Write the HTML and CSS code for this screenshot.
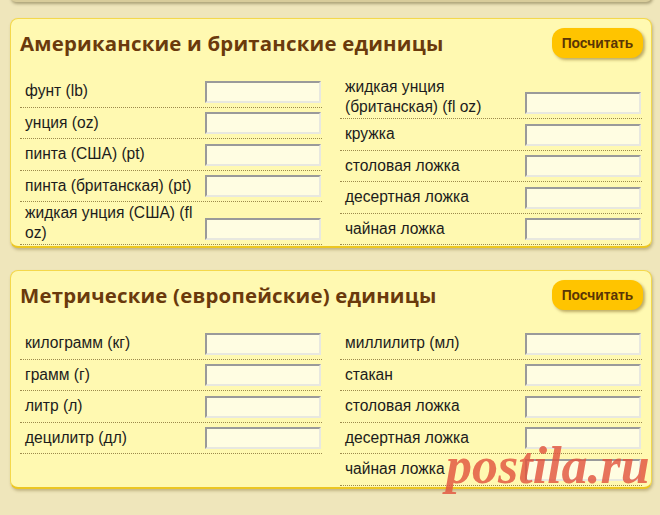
FILE: index.html
```html
<!DOCTYPE html>
<html>
<head>
    <title>Конвертер единиц</title>
    <link rel="stylesheet" href="styles.css">
</head>
<body>
    <div class="page">
        <div class="card card-stub"></div>

        <div class="card">
            <div class="card-head">
                <h2>Американские и британские единицы</h2>
                <button type="button">Посчитать</button>
            </div>
            <div class="columns">
                <div class="col">
                    <div class="row"><label>фунт (lb)</label><input type="text"></div>
                    <div class="row"><label>унция (oz)</label><input type="text"></div>
                    <div class="row"><label>пинта (США) (pt)</label><input type="text"></div>
                    <div class="row"><label>пинта (британская) (pt)</label><input type="text"></div>
                    <div class="row"><label>жидкая унция (США) (fl oz)</label><input type="text"></div>
                </div>
                <div class="col">
                    <div class="row"><label>жидкая унция (британская) (fl oz)</label><input type="text"></div>
                    <div class="row"><label>кружка</label><input type="text"></div>
                    <div class="row"><label>столовая ложка</label><input type="text"></div>
                    <div class="row"><label>десертная ложка</label><input type="text"></div>
                    <div class="row"><label>чайная ложка</label><input type="text"></div>
                </div>
            </div>
        </div>

        <div class="card">
            <div class="card-head">
                <h2>Метрические (европейские) единицы</h2>
                <button type="button">Посчитать</button>
            </div>
            <div class="columns">
                <div class="col">
                    <div class="row"><label>килограмм (кг)</label><input type="text"></div>
                    <div class="row"><label>грамм (г)</label><input type="text"></div>
                    <div class="row"><label>литр (л)</label><input type="text"></div>
                    <div class="row"><label>децилитр (дл)</label><input type="text"></div>
                </div>
                <div class="col">
                    <div class="row"><label>миллилитр (мл)</label><input type="text"></div>
                    <div class="row"><label>стакан</label><input type="text"></div>
                    <div class="row"><label>столовая ложка</label><input type="text"></div>
                    <div class="row"><label>десертная ложка</label><input type="text"></div>
                    <div class="row"><label>чайная ложка</label><input type="text"></div>
                </div>
            </div>
        </div>

        <div class="watermark">postila.ru</div>
    </div>
</body>
</html>
```

FILE: styles.css
```css
* {
    margin: 0;
    padding: 0;
    box-sizing: border-box;
}

body {
    background: #efe6bb;
    font-family: "Liberation Sans", Arial, sans-serif;
    overflow: hidden;
}

.page {
    position: relative;
    width: 660px;
    height: 515px;
    padding: 0 8px 0 10px;
}

.card {
    width: 642px;
    background: #fff9b1;
    border: 1px solid #f4d84c;
    border-bottom: 2px solid #ecc621;
    border-radius: 8px;
    box-shadow: 1px 2px 3px rgba(110, 90, 30, 0.35);
    padding-bottom: 1px;
    margin-bottom: 22px;
}

.card-stub {
    height: 12px;
    margin-top: -10px;
    margin-bottom: 16px;
    border-color: #d8cc9a;
    background: #e9dfb4;
    box-shadow: 1px 2px 3px rgba(90, 80, 40, 0.45);
}

.card-head {
    display: flex;
    justify-content: space-between;
    align-items: flex-start;
    padding: 9px 8px 0 9px;
    margin-bottom: 18px;
}

.card-head h2 {
    font-family: "Open Sans", sans-serif;
    font-weight: 700;
    font-size: 20.4px;
    line-height: 30px;
    color: #6a3a0c;
    letter-spacing: 0.2px;
}

.card-head button {
    width: 91px;
    height: 30px;
    border: none;
    border-radius: 12px;
    background: #ffc400;
    color: #5a3505;
    font-family: "Liberation Sans", Arial, sans-serif;
    font-weight: 700;
    font-size: 13.8px;
    box-shadow: 2px 2px 3px rgba(110, 80, 10, 0.45);
    cursor: pointer;
}

.columns {
    display: grid;
    grid-template-columns: 302px 302px;
    column-gap: 18px;
    align-items: start;
    padding: 0 9px;
}

.row {
    display: flex;
    align-items: center;
    padding-left: 5px;
    border-bottom: 1px dotted #9c8a4c;
}

.row label {
    flex: 1;
    font-size: 15.6px;
    line-height: 20px;
    padding: 1px 0;
    color: #1c1c1c;
}

.row input {
    align-self: flex-end;
    width: 116px;
    height: 22px;
    margin: 4.5px 1px 4px 0;
    border: 2px solid;
    border-color: #9a9a9a #e8e8e0 #e8e8e0 #9a9a9a;
    background: #fffde2;
    font-size: 13px;
}

.watermark {
    position: absolute;
    left: 446px;
    top: 461px;
    font-family: "Liberation Serif", serif;
    font-style: italic;
    font-weight: 700;
    font-size: 52px;
    line-height: 30px;
    color: rgba(226, 84, 62, 0.82);
    pointer-events: none;
}
```
